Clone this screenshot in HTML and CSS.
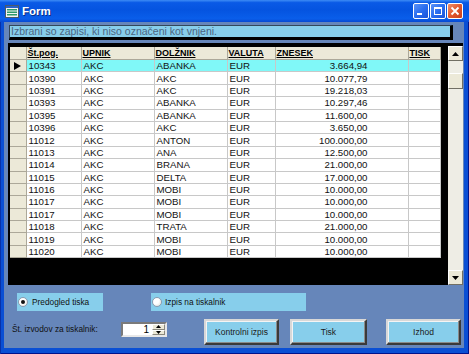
FILE: index.html
```html
<!DOCTYPE html>
<html lang="sl">
<head>
    <meta charset="UTF-8">
    <title>Form</title>
    <link rel="stylesheet" href="styles.css">
</head>
<body>

    <div class="window">
        <!-- Title bar -->
        <div class="titlebar">
            <svg class="app-icon" width="14" height="13" viewBox="0 0 14 13">
                <rect x="0.5" y="0.5" width="13" height="12" fill="#f4f4f4" stroke="#4a5a6a"/>
                <rect x="1" y="1" width="12" height="2" fill="#2a62c8"/>
                <rect x="2" y="4" width="10" height="1.5" fill="#2f9a6a"/>
                <rect x="2" y="6.5" width="10" height="1.5" fill="#2f9a6a"/>
                <rect x="2" y="9" width="10" height="1.5" fill="#2f9a6a"/>
            </svg>
            <span class="title">Form</span>
            <div class="caption-buttons">
                <div class="cap">
                    <svg width="14" height="14" viewBox="0 0 14 14"><rect x="3" y="9" width="5" height="2" fill="#fff"/></svg>
                </div>
                <div class="cap">
                    <svg width="14" height="14" viewBox="0 0 14 14"><rect x="3.5" y="3.5" width="7" height="7" fill="none" stroke="#fff"/><rect x="3" y="3" width="8" height="2" fill="#fff"/></svg>
                </div>
                <div class="cap close">
                    <svg width="14" height="14" viewBox="0 0 14 14"><path d="M3.5 3.5 L10.5 10.5 M10.5 3.5 L3.5 10.5" stroke="#fff" stroke-width="1.8"/></svg>
                </div>
            </div>
        </div>

        <div class="client">
            <div class="message">Izbrani so zapisi, ki niso označeni kot vnjeni.</div>

            <!-- Datasheet -->
            <div class="datasheet">
                <div class="sheet">
                    <table class="grid">
                        <colgroup>
                            <col style="width: 16px">
                            <col style="width: 55px">
                            <col style="width: 73px">
                            <col style="width: 73px">
                            <col style="width: 48px">
                            <col style="width: 133px">
                            <col style="width: 32px">
                        </colgroup>
                        <thead>
                            <tr>
                                <th class="sel"></th>
                                <th>Št.pog.</th>
                                <th>UPNIK</th>
                                <th>DOLŽNIK</th>
                                <th>VALUTA</th>
                                <th>ZNESEK</th>
                                <th>TISK</th>
                            </tr>
                        </thead>
                        <tbody>
                            <tr class="current"><td class="sel"><span class="pointer"></span></td><td>10343</td><td>AKC</td><td>ABANKA</td><td>EUR</td><td class="num">3.664,94</td><td></td></tr>
                            <tr><td class="sel"></td><td>10390</td><td>AKC</td><td>AKC</td><td>EUR</td><td class="num">10.077,79</td><td></td></tr>
                            <tr><td class="sel"></td><td>10391</td><td>AKC</td><td>AKC</td><td>EUR</td><td class="num">19.218,03</td><td></td></tr>
                            <tr><td class="sel"></td><td>10393</td><td>AKC</td><td>ABANKA</td><td>EUR</td><td class="num">10.297,46</td><td></td></tr>
                            <tr><td class="sel"></td><td>10395</td><td>AKC</td><td>ABANKA</td><td>EUR</td><td class="num">11.600,00</td><td></td></tr>
                            <tr><td class="sel"></td><td>10396</td><td>AKC</td><td>AKC</td><td>EUR</td><td class="num">3.650,00</td><td></td></tr>
                            <tr><td class="sel"></td><td>11012</td><td>AKC</td><td>ANTON</td><td>EUR</td><td class="num">100.000,00</td><td></td></tr>
                            <tr><td class="sel"></td><td>11013</td><td>AKC</td><td>ANA</td><td>EUR</td><td class="num">12.500,00</td><td></td></tr>
                            <tr><td class="sel"></td><td>11014</td><td>AKC</td><td>BRANA</td><td>EUR</td><td class="num">21.000,00</td><td></td></tr>
                            <tr><td class="sel"></td><td>11015</td><td>AKC</td><td>DELTA</td><td>EUR</td><td class="num">17.000,00</td><td></td></tr>
                            <tr><td class="sel"></td><td>11016</td><td>AKC</td><td>MOBI</td><td>EUR</td><td class="num">10.000,00</td><td></td></tr>
                            <tr><td class="sel"></td><td>11017</td><td>AKC</td><td>MOBI</td><td>EUR</td><td class="num">10.000,00</td><td></td></tr>
                            <tr><td class="sel"></td><td>11017</td><td>AKC</td><td>MOBI</td><td>EUR</td><td class="num">10.000,00</td><td></td></tr>
                            <tr><td class="sel"></td><td>11018</td><td>AKC</td><td>TRATA</td><td>EUR</td><td class="num">21.000,00</td><td></td></tr>
                            <tr><td class="sel"></td><td>11019</td><td>AKC</td><td>MOBI</td><td>EUR</td><td class="num">10.000,00</td><td></td></tr>
                            <tr><td class="sel"></td><td>11020</td><td>AKC</td><td>MOBI</td><td>EUR</td><td class="num">10.000,00</td><td></td></tr>
                        </tbody>
                    </table>
                </div>
                <div class="scrollbar">
                    <div class="sb-btn">
                        <svg width="7" height="4" viewBox="0 0 7 4"><path d="M0 4 L3.5 0 L7 4 Z" fill="#000"/></svg>
                    </div>
                    <div class="sb-track short"></div>
                    <div class="sb-thumb"></div>
                    <div class="sb-track"></div>
                    <div class="sb-btn">
                        <svg width="7" height="4" viewBox="0 0 7 4"><path d="M0 0 L3.5 4 L7 0 Z" fill="#000"/></svg>
                    </div>
                </div>
            </div>

            <!-- Print options -->
            <div class="options">
                <div class="option first">
                    <span class="radio checked"></span>
                    <span>Predogled tiska</span>
                </div>
                <div class="option second">
                    <span class="radio"></span>
                    <span>Izpis na tiskalnik</span>
                </div>
            </div>

            <div class="actions">
                <span class="copies-label">Št. izvodov za tiskalnik:</span>
                <div class="spinner">
                    <span class="spin-value">1</span>
                    <div class="spin-buttons">
                        <div class="spin-btn">
                            <svg width="5" height="3" viewBox="0 0 5 3"><path d="M0 3 L2.5 0 L5 3 Z" fill="#000"/></svg>
                        </div>
                        <div class="spin-btn">
                            <svg width="5" height="3" viewBox="0 0 5 3"><path d="M0 0 L2.5 3 L5 0 Z" fill="#000"/></svg>
                        </div>
                    </div>
                </div>
                <div class="btn btn-check">Kontrolni izpis</div>
                <div class="btn btn-print">Tisk</div>
                <div class="btn btn-exit">Izhod</div>
            </div>
        </div>
    </div>

</body>
</html>
```

FILE: styles.css
```css
body {
    margin: 0;
    font-family: "Liberation Sans", Arial, sans-serif;
}
.window {
    width: 469px;
    height: 354px;
    display: flex;
    flex-direction: column;
    background: #0a4fd4;
    box-shadow: inset 1px 0 #0831a8, inset -1px -1px #00138c;
}
.titlebar {
    height: 22px;
    display: flex;
    align-items: center;
    background: linear-gradient(to bottom, #3d8cf5 0%, #0a5ae6 12%, #0554e0 45%, #0a5eea 85%, #0849d2 100%);
    color: #fff;
}
.app-icon {
    margin-left: 5px;
}
.title {
    margin-left: 3px;
    font-size: 11.5px;
    font-weight: bold;
    text-shadow: 1px 1px #0a2e88;
}
.caption-buttons {
    margin-left: auto;
    margin-right: 6px;
    display: flex;
    gap: 1px;
}
.cap {
    width: 14px;
    height: 14px;
    border: 1px solid #fff;
    border-radius: 2px;
    background: linear-gradient(135deg, #5a92f6 0%, #2a6ef0 50%, #1a52d8 100%);
    display: flex;
}
.cap.close {
    background: linear-gradient(135deg, #f0906a 0%, #e2582e 50%, #c8401c 100%);
}
.client {
    flex: 1;
    margin: 0 5px 6px 4px;
    background: #6686ba;
    display: flex;
    flex-direction: column;
}
.message {
    margin: 3px 0 0 5px;
    width: 439px;
    height: 11px;
    padding-left: 1px;
    background: #87ceeb;
    border-top: 1px solid #33475a;
    border-left: 1px solid #33475a;
    border-right: 3px solid #000;
    border-bottom: 3px solid #000;
    font-size: 10.5px;
    line-height: 11px;
    color: #4b6580;
    white-space: nowrap;
    overflow: hidden;
}
.datasheet {
    margin: 3px 0 0 4px;
    width: 455px;
    height: 242px;
    background: #000;
    display: flex;
}
.sheet {
    padding: 4px 0 0 2px;
}
.grid {
    width: 430px;
    table-layout: fixed;
    border-collapse: collapse;
    background: #fff;
    font-size: 9.7px;
    line-height: 11px;
    color: #111;
}
.grid th {
    height: 12px;
    padding: 0 0 0 1px;
    background: #ece9d8;
    border-right: 1px solid #aca899;
    border-bottom: 1px solid #aca899;
    font-size: 9px;
    font-weight: bold;
    text-align: left;
    text-decoration: underline;
    color: #000;
}
.grid td {
    height: 11.4px;
    padding: 0 0 0 2px;
    border-right: 1px solid #c8c8c8;
    border-bottom: 1px solid #c8c8c8;
    white-space: nowrap;
    overflow: hidden;
}
.grid .sel {
    background: #ece9d8;
    border-right: 1px solid #aca899;
    border-bottom: 1px solid #aca899;
    padding: 0;
}
.grid .num {
    text-align: right;
    padding-right: 40px;
}
.grid .current td {
    background: #80f8f8;
}
.grid .current td.sel {
    background: #ece9d8;
}
.pointer {
    display: block;
    width: 0;
    height: 0;
    margin-left: 4px;
    border-top: 4px solid transparent;
    border-bottom: 4px solid transparent;
    border-left: 7px solid #000;
}
.scrollbar {
    margin: 3px 0 0 auto;
    width: 15px;
    height: 239px;
    display: flex;
    flex-direction: column;
    background: #eeede5;
}
.sb-btn {
    height: 13px;
    display: flex;
    align-items: center;
    justify-content: center;
    background: #ece9d8;
    border-top: 1px solid #fff;
    border-left: 1px solid #fff;
    border-right: 1px solid #716f64;
    border-bottom: 1px solid #716f64;
}
.sb-track {
    flex: 1;
}
.sb-track.short {
    flex: 0 0 12px;
}
.sb-thumb {
    height: 14px;
    background: #ece9d8;
    border-top: 1px solid #fff;
    border-left: 1px solid #fff;
    border-right: 1px solid #716f64;
    border-bottom: 1px solid #716f64;
}
.options {
    margin-top: 8px;
    padding-left: 13px;
    display: flex;
    height: 18px;
}
.option {
    display: flex;
    align-items: center;
    background: #87ceeb;
    font-size: 8.3px;
    color: #111;
}
.option.first {
    width: 85px;
    padding-left: 1px;
    gap: 4px;
    margin-right: 48px;
}
.option.second {
    width: 154px;
    padding-left: 1px;
    gap: 3px;
}
.radio {
    width: 8px;
    height: 8px;
    border: 1px solid #8a9cb0;
    border-radius: 50%;
    background: radial-gradient(circle at 35% 35%, #fff 40%, #dcdcd4 100%);
    display: flex;
    align-items: center;
    justify-content: center;
}
.radio.checked::after {
    content: "";
    width: 4px;
    height: 4px;
    border-radius: 50%;
    background: #111;
}
.actions {
    margin-top: 8px;
    height: 26px;
    padding-left: 8px;
    display: flex;
    align-items: flex-start;
}
.copies-label {
    width: 109px;
    margin-top: 5px;
    font-size: 8.3px;
    line-height: 11px;
    color: #111;
}
.spinner {
    margin-top: 3px;
    width: 42px;
    height: 11px;
    display: flex;
    background: #fff;
    border-top: 2px solid #7a7a7a;
    border-left: 2px solid #7a7a7a;
    border-right: 2px solid #e8e8e8;
    border-bottom: 2px solid #e8e8e8;
}
.spin-value {
    flex: 1;
    text-align: right;
    padding-right: 3px;
    font-size: 10px;
    line-height: 11px;
    color: #000;
}
.spin-buttons {
    width: 13px;
    display: flex;
    flex-direction: column;
}
.spin-btn {
    flex: 1;
    display: flex;
    align-items: center;
    justify-content: center;
    background: #ece9d8;
    border-top: 1px solid #fff;
    border-left: 1px solid #fff;
    border-right: 1px solid #8a887c;
    border-bottom: 1px solid #8a887c;
}
.btn {
    height: 22px;
    display: flex;
    align-items: center;
    justify-content: center;
    background: #87ceeb;
    border-top: 2px solid #d8d8d8;
    border-left: 2px solid #d8d8d8;
    border-right: 2px solid #3a3a3a;
    border-bottom: 2px solid #3a3a3a;
    box-shadow: inset -1px -1px #8a8a8a, inset 1px 1px #f4f4f4;
    font-size: 8.5px;
    color: #1a1a1a;
}
.btn-check {
    margin-left: 37px;
    width: 71px;
}
.btn-print {
    margin-left: 11px;
    width: 73px;
}
.btn-exit {
    margin-left: 19px;
    width: 71px;
}
```
